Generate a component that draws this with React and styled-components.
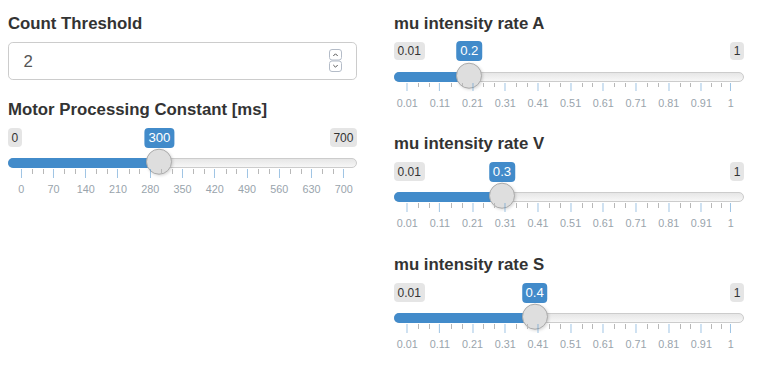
import React from "react";
import styled, { createGlobalStyle } from "styled-components";

const GlobalStyle = createGlobalStyle`
  html, body { margin: 0; padding: 0; background: #fff; }
  body { font-family: "Liberation Sans", Arial, sans-serif; color: #333; }
`;

const Page = styled.div`
  display: grid;
  grid-template-columns: 349px 350px;
  column-gap: 37px;
  padding: 11.7px 0 0 8px;
  align-items: start;
`;

const Column = styled.div`
  display: flex;
  flex-direction: column;
`;

const FormGroup = styled.div`
  margin-bottom: 18.3px;
`;

const Label = styled.div`
  font-weight: bold;
  font-size: 16.8px;
  line-height: 24px;
  margin-bottom: 6px;
  color: #333;
  white-space: nowrap;
`;

const NumberField = styled.div`
  box-sizing: border-box;
  height: 38.5px;
  border: 1px solid #ccc;
  border-radius: 4.8px;
  padding: 0 14px 0 14.4px;
  display: flex;
  align-items: center;
  justify-content: space-between;
  background: #fff;
`;

const FieldValue = styled.span`
  font-size: 16.8px;
  line-height: 24px;
  padding-top: 3px;
  color: #555;
`;

/* slider widget */
const Irs = styled.div`
  display: flex;
  flex-direction: column;
  width: 100%;
  height: 72.5px;
`;

const TagRow = styled.div`
  position: relative;
  display: flex;
  justify-content: space-between;
  align-items: flex-start;
  height: 20px;
`;

const EdgeTag = styled.span`
  font-size: 12px;
  line-height: 16px;
  padding: 1.4px 3.6px;
  background: rgba(0, 0, 0, 0.1);
  color: #333;
  border-radius: 4px;
  white-space: nowrap;
`;

const SingleTag = styled.span`
  position: absolute;
  top: -0.5px;
  transform: translateX(-50%);
  font-size: 13.2px;
  line-height: 17.6px;
  padding: 1.3px 3.6px;
  background: #428bca;
  color: #fff;
  border-radius: 4px;
  white-space: nowrap;
`;

const Track = styled.div`
  position: relative;
  margin-top: 10px;
  height: 10px;
  box-sizing: border-box;
  border: 1px solid #ccc;
  border-radius: 10px;
  background: linear-gradient(to bottom, #dedede -50%, #fff 150%);
`;

const Bar = styled.span`
  position: absolute;
  top: -1px;
  bottom: -1px;
  left: -1px;
  background: #428bca;
  border-radius: 10px 0 0 10px;
`;

const Handle = styled.span`
  position: absolute;
  top: 50%;
  width: 26px;
  height: 26px;
  box-sizing: border-box;
  transform: translate(-50%, -55%);
  border: 1.2px solid #ababab;
  background: #dedede;
  border-radius: 50%;
  box-shadow: 1px 1px 3px rgba(0, 0, 0, 0.15);
`;

const Grid = styled.div`
  position: relative;
  margin-top: 1px;
  flex: 1;
`;

const MajorMark = styled.div`
  position: absolute;
  top: 0;
  display: flex;
  flex-direction: column;
  align-items: center;
  gap: 5.5px;
  transform: translateX(-50%);
`;

const Tick = styled.span`
  display: block;
  width: 1px;
  height: ${(p) => (p.$big ? "8.5px" : "4.5px")};
  background: ${(p) => (p.$big ? "rgba(66, 139, 202, 0.5)" : "#b8b8b8")};
`;

const MinorTick = styled(Tick)`
  position: absolute;
  top: 0;
`;

const TickText = styled.span`
  font-size: 10.8px;
  line-height: 13px;
  color: #99a4ac;
  white-space: nowrap;
`;

const at = (p) => `calc(13.2px + (100% - 26.4px) * ${p})`;
const atTrack = (p) => `calc(12.2px + (100% - 24.4px) * ${p})`;

function Spinner() {
  return (
    <svg width="13" height="23" viewBox="0 0 13 23">
      <rect x="0.5" y="0.5" width="12" height="10.5" rx="2.5" fill="#fff" stroke="#b4bcc8" />
      <rect x="0.5" y="12" width="12" height="10.5" rx="2.5" fill="#fff" stroke="#b4bcc8" />
      <path d="M4.3 7 L6.5 4.8 L8.7 7" stroke="#555" strokeWidth="1" fill="none" />
      <path d="M4.3 16 L6.5 18.2 L8.7 16" stroke="#555" strokeWidth="1" fill="none" />
    </svg>
  );
}

function Slider({ min, max, value, ticks, minText, maxText, valueText }) {
  const p = (v) => (v - min) / (max - min);
  const pv = p(value);
  const smalls = [];
  for (let i = 0; i < ticks.length - 1; i++) {
    const a = p(ticks[i].v);
    const b = p(ticks[i + 1].v);
    smalls.push(a + (b - a) / 3, a + (2 * (b - a)) / 3);
  }
  return (
    <Irs>
      <TagRow>
        <EdgeTag>{minText}</EdgeTag>
        <EdgeTag>{maxText}</EdgeTag>
        <SingleTag style={{ left: at(pv) }}>{valueText}</SingleTag>
      </TagRow>
      <Track>
        <Bar style={{ width: at(pv) }} />
        <Handle style={{ left: atTrack(pv) }} />
      </Track>
      <Grid>
        {smalls.map((s, i) => (
          <MinorTick key={"s" + i} style={{ left: at(s) }} />
        ))}
        {ticks.map((t, i) => (
          <MajorMark key={"b" + i} style={{ left: at(p(t.v)) }}>
            <Tick $big />
            <TickText>{t.label}</TickText>
          </MajorMark>
        ))}
      </Grid>
    </Irs>
  );
}

const msTicks = Array.from({ length: 11 }, (_, i) => ({ v: i * 70, label: String(i * 70) }));
const muTicks = [
  ...Array.from({ length: 10 }, (_, i) => ({
    v: 0.01 + i * 0.1,
    label: (0.01 + i * 0.1).toFixed(2),
  })),
  { v: 1, label: "1" },
];

const rates = [
  { name: "A", value: 0.2 },
  { name: "V", value: 0.3 },
  { name: "S", value: 0.4 },
];

export default function App() {
  return (
    <>
      <GlobalStyle />
      <Page>
        <Column>
          <FormGroup>
            <Label>Count Threshold</Label>
            <NumberField>
              <FieldValue>2</FieldValue>
              <Spinner />
            </NumberField>
          </FormGroup>
          <FormGroup>
            <Label>Motor Processing Constant [ms]</Label>
            <Slider
              min={0}
              max={700}
              value={300}
              ticks={msTicks}
              minText="0"
              maxText="700"
              valueText="300"
            />
          </FormGroup>
        </Column>
        <Column>
          {rates.map((r) => (
            <FormGroup key={r.name}>
              <Label>mu intensity rate {r.name}</Label>
              <Slider
                min={0.01}
                max={1}
                value={r.value}
                ticks={muTicks}
                minText="0.01"
                maxText="1"
                valueText={String(r.value)}
              />
            </FormGroup>
          ))}
        </Column>
      </Page>
    </>
  );
}
